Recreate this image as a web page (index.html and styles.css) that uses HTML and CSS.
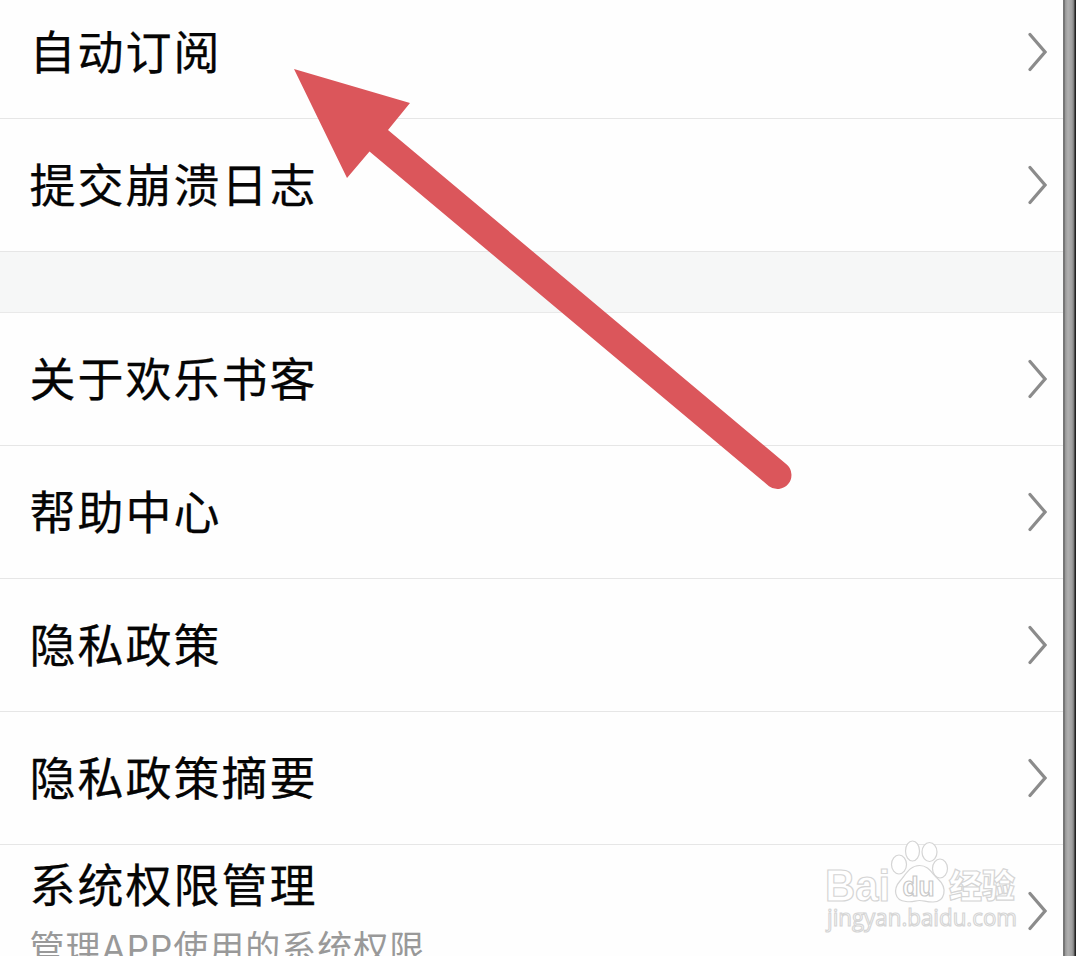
FILE: index.html
```html
<!DOCTYPE html>
<html lang="zh-CN">

<head>
    <meta charset="utf-8">
    <title>设置</title>
    <link rel="stylesheet" href="styles.css">
</head>

<body>
    <div class="screen">
        <div class="list">
            <div class="row first">
                <div class="title">自动订阅</div>
                <svg class="chevron" viewBox="0 0 20 40"><path d="M3 2.500L18 20L3 37.500"/></svg>
            </div>
            <div class="row">
                <div class="title">提交崩溃日志</div>
                <svg class="chevron" viewBox="0 0 20 40"><path d="M3 2.500L18 20L3 37.500"/></svg>
            </div>
            <div class="space"></div>
            <div class="row">
                <div class="title">关于欢乐书客</div>
                <svg class="chevron" viewBox="0 0 20 40"><path d="M3 2.500L18 20L3 37.500"/></svg>
            </div>
            <div class="row">
                <div class="title">帮助中心</div>
                <svg class="chevron" viewBox="0 0 20 40"><path d="M3 2.500L18 20L3 37.500"/></svg>
            </div>
            <div class="row">
                <div class="title">隐私政策</div>
                <svg class="chevron" viewBox="0 0 20 40"><path d="M3 2.500L18 20L3 37.500"/></svg>
            </div>
            <div class="row">
                <div class="title">隐私政策摘要</div>
                <svg class="chevron" viewBox="0 0 20 40"><path d="M3 2.500L18 20L3 37.500"/></svg>
            </div>
            <div class="row">
                <div class="both">
                    <div class="title">系统权限管理</div>
                    <div class="sub">管理APP使用的系统权限</div>
                </div>
                <svg class="chevron" viewBox="0 0 20 40"><path d="M3 2.500L18 20L3 37.500"/></svg>
            </div>
        </div>
        <div class="edge"></div>

        <svg class="arrow" viewBox="0 0 510 440">
            <path d="M4 9L120 43L98 70L497 404.800A14 14 0 0 1 479 426.200L79.500 91.500L57 118Z"/>
        </svg>

        <svg class="watermark" viewBox="0 0 200 100">
            <text class="logo" x="2" y="60.500" textLength="65" lengthAdjust="spacingAndGlyphs">Bai</text>
            <ellipse cx="76" cy="24.500" rx="7.500" ry="9.500"/>
            <ellipse cx="89.500" cy="11" rx="7" ry="10"/>
            <ellipse cx="106.500" cy="12" rx="7.500" ry="9.500"/>
            <ellipse cx="117" cy="28.500" rx="7.500" ry="9.500"/>
            <path d="M96.500 25.500C106 25.500 109 34 115 39C125 48 122 62 110 62C103 62 101 60.500 96.500 60.500C92 60.500 90 62.500 83 61.500C71 60.500 70 49 77 41C83 34 87 25.500 96.500 25.500Z"/>
            <text class="du" x="79.500" y="56" textLength="32" lengthAdjust="spacingAndGlyphs">du</text>
            <text class="cn" x="126" y="58" textLength="66" lengthAdjust="spacingAndGlyphs">经验</text>
            <text class="url" x="4" y="86" textLength="190" lengthAdjust="spacingAndGlyphs">jingyan.baidu.com</text>
        </svg>
    </div>
</body>

</html>
```
FILE: styles.css
```css
body {
    margin: 0;
    background: #fefefe;
    font-family: "Noto Sans CJK SC", sans-serif;
    overflow: hidden;
}

.screen {
    position: relative;
    display: flex;
    height: 956px;
    overflow: hidden;
}

.list {
    flex: 1;
}

.row {
    box-sizing: border-box;
    display: flex;
    align-items: center;
    justify-content: space-between;
    height: 133px;
    padding: 0 16px 0 29.5px;
    border-bottom: 1px solid #e6e6e6;
}

.first {
    height: 119px;
    padding-bottom: 14px;
}

.space {
    height: 61px;
    box-sizing: border-box;
    background: #f6f7f7;
    border-bottom: 1px solid #e9e9e9;
}

.title {
    color: #050505;
    font-size: 46px;
    line-height: 60px;
    letter-spacing: 2px;
    white-space: nowrap;
    padding-bottom: 6px;
    -webkit-text-stroke: 0.25px #050505;
}

.sub {
    margin-top: 5px;
    color: #999;
    font-family: Inter, "Noto Sans CJK SC", sans-serif;
    font-size: 35px;
    line-height: 50px;
    letter-spacing: 1px;
    white-space: nowrap;
}

.both {
    padding-top: 2px;
}

.chevron {
    width: 20px;
    height: 40px;
    fill: none;
    stroke: #8b8b8b;
    stroke-width: 3.2;
    stroke-linecap: round;
}

.edge {
    width: 13px;
    background: linear-gradient(90deg, #777 0, #777 2px, #969696 2px, #b0b0b0 5px, #a0a0a0 9px, #777 11px, #222 12px, #222 13px);
}

.arrow {
    position: absolute;
    left: 290px;
    top: 60px;
    width: 510px;
    height: 440px;
    fill: #db565b;
}

/* outlined logo over the list */
.watermark {
    position: absolute;
    left: 823px;
    top: 840px;
    width: 200px;
    height: 100px;
    overflow: visible;
    fill: #fff;
    stroke: #d5d5d5;
    stroke-width: 1.2;
}

.logo {
    font: bold 44px "Liberation Sans", sans-serif;
}

.du {
    font: bold 27px "Liberation Sans", sans-serif;
    stroke: #c8c8c8;
}

.cn {
    font: 900 33px "Noto Sans CJK SC", sans-serif;
}

.url {
    font: 24px "Open Sans", sans-serif;
}
```
